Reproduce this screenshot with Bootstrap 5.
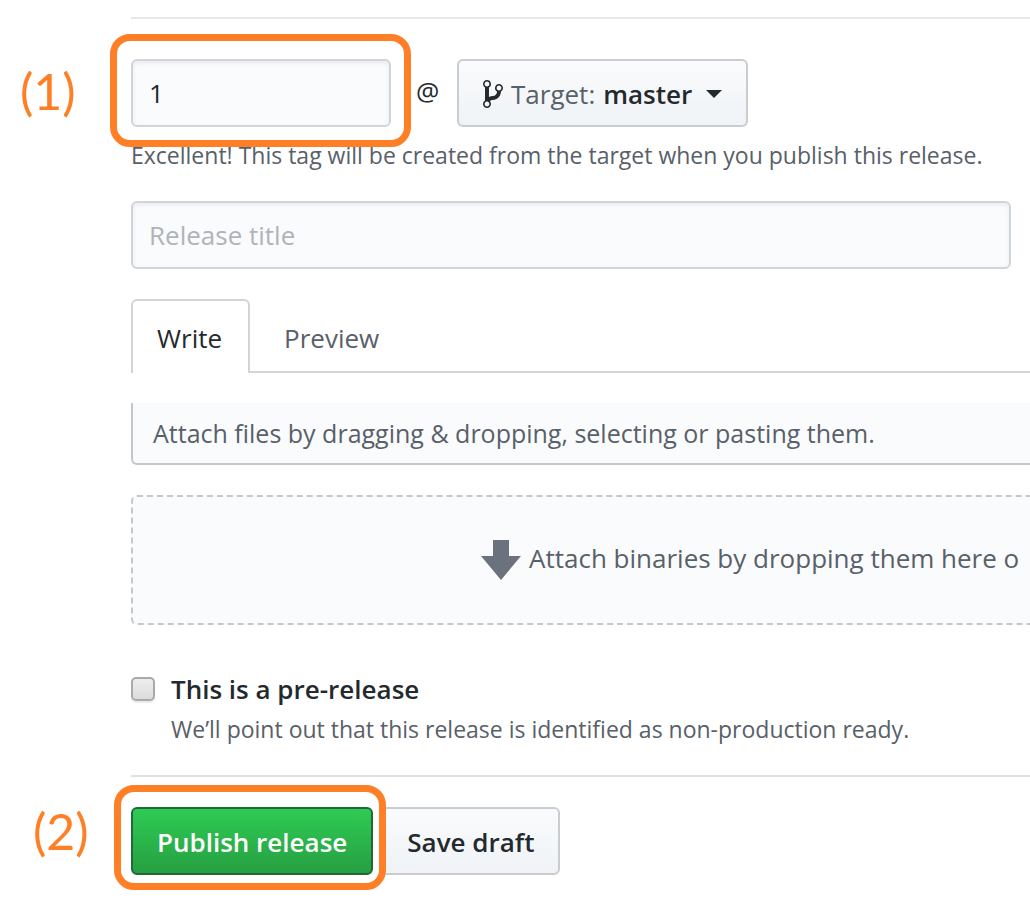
<!DOCTYPE html>
<html lang="en">
<head>
<meta charset="utf-8">
<meta name="viewport" content="width=device-width, initial-scale=1">
<title>New release</title>
<link href="https://cdn.jsdelivr.net/npm/bootstrap@5.3.0/dist/css/bootstrap.min.css" rel="stylesheet">
<style>
  body { font-family: "Open Sans", "Noto Sans", sans-serif; font-size: 26px; line-height: 36px; color: #24292e; background: #fff; overflow-x: hidden; }
  .page { padding-top: 17px; }
  .gutter { flex: 0 0 131px; }
  .indent { margin-left: 131px; }
  .rule { border-top: 2px solid #e6e8ec; }
  .rule-end { border-color: #dfe2e5; margin-top: 28px; }
  .step { font-family: Lato, sans-serif; font-size: 50px; color: #ff7f27; }
  .step-1 { padding-left: 20px; line-height: 64px; }
  .step-2 { padding-left: 33px; line-height: 48px; }
  .ring { position: absolute; border: 7px solid #ff7f27; border-radius: 20px; pointer-events: none; z-index: 2; }
  .ring-tag { inset: -25px -20px -20px -21px; }
  .ring-publish { inset: -22px -13px -15px -17px; }
  .field { height: 68px; padding: 0 16px; font-size: 26px; color: #24292e; background: #fafbfc; border: 2px solid #d1d5da; border-radius: 6px; box-shadow: inset 0 2px 4px rgba(27,31,35,.075); }
  .field::placeholder { color: #afb4ba; opacity: 1; }
  .tag-box { width: 260px; }
  .at { width: 66px; line-height: 64px; padding-left: 25px; font-size: 26px; }
  .btn-box { height: 68px; padding: 2px 24px 0; font-size: 26px; font-weight: 600; line-height: 36px; border: 2px solid #c9ccd1; border-radius: 6px; color: #24292e; background: linear-gradient(#fafbfc, #eff3f6); white-space: nowrap; }
  .btn-publish { color: #fff; border-color: #22693a; background: linear-gradient(#2fcb53, #269f42); }
  .target-word { color: #586069; font-weight: 500; }
  .caret { border: 8px solid transparent; border-top-color: #24292e; border-bottom: 0; margin-left: 14px; }
  .note { font-size: 23px; line-height: 36px; color: #586069; white-space: nowrap; }
  .tag-note { margin-top: 10px; }
  .title-row { margin: 28px 19px 30px 131px; }
  .tabs { border-bottom: 2px solid #d1d5da; height: 74px; }
  .tab { height: 74px; border: 2px solid transparent; border-bottom: 0; border-radius: 6px 6px 0 0; background: none; color: #586069; padding: 2px 26px 0 24px; }
  .tab-on { background: #fff; border-color: #d1d5da; color: #24292e; }
  .attach { height: 62px; margin-top: 30px; padding-left: 20px; border: 2px solid #c3c8cf; border-width: 0 0 2px 2px; border-bottom-left-radius: 6px; background: #fafbfc; color: #586069; font-size: 25px; }
  .drop { height: 130px; margin-top: 30px; padding-left: 348px; border: 2px dashed #c3c8cf; border-right: 0; border-radius: 6px 0 0 6px; background: #fafbfc; color: #586069; white-space: nowrap; overflow: hidden; }
  .pre { margin-top: 46px; }
  .tick { appearance: none; width: 24px; height: 24px; margin: 6px 16px 0 0; border: 2px solid #aaa; border-radius: 5px; background: linear-gradient(#ededed, #dcdcdc); box-shadow: 0 2px 1px rgba(0,0,0,.08); }
  .buttons { margin-top: 30px; }
</style>
</head>
<body>
<main class="page overflow-hidden pb-4">
  <div class="indent rule"></div>
  <div class="d-flex mt-4 pt-3">
    <div class="gutter step step-1">(1)</div>
    <div class="position-relative">
      <input class="field tag-box d-block" type="text" value="1" aria-label="Tag version">
      <span class="ring ring-tag"></span>
    </div>
    <span class="at">@</span>
    <button class="btn-box d-flex align-items-center" type="button">
      <svg width="20" height="32" viewBox="0 0 10 16" fill="#24292e" class="me-2" aria-hidden="true"><path fill-rule="evenodd" d="M10 5c0-1.11-.89-2-2-2a1.993 1.993 0 0 0-1 3.72v.3c-.02.52-.23.98-.63 1.38-.4.4-.86.61-1.38.63-.83.02-1.48.16-2 .45V4.72a1.993 1.993 0 0 0-1-3.72C.88 1 0 1.89 0 3a2 2 0 0 0 1 1.72v6.56c-.59.35-1 .99-1 1.72 0 1.11.89 2 2 2 1.11 0 2-.89 2-2 0-.53-.2-1-.53-1.36.09-.06.48-.41.59-.47.25-.11.56-.17.94-.17 1.05-.05 1.95-.45 2.75-1.25S8.950 7.770 9 6.730h-.02C9.590 6.370 10 5.730 10 5zM2 1.800c.66 0 1.200.55 1.200 1.200 0 .65-.55 1.200-1.200 1.200C1.350 4.200.8 3.650.8 3c0-.65.55-1.200 1.200-1.200zm0 12.410c-.66 0-1.200-.55-1.200-1.200 0-.65.55-1.200 1.200-1.200.65 0 1.200.55 1.200 1.200 0 .65-.55 1.200-1.200 1.200zm6-8c-.66 0-1.200-.55-1.200-1.200 0-.65.55-1.200 1.200-1.200.65 0 1.200.55 1.200 1.200 0 .65-.55 1.200-1.200 1.200z"/></svg>
      <span class="target-word me-2">Target:</span><span>master</span><span class="caret"></span>
    </button>
  </div>
  <div class="indent note tag-note">Excellent! This tag will be created from the target when you publish this release.</div>
  <div class="title-row"><input class="field d-block w-100" type="text" placeholder="Release title" aria-label="Release title"></div>
  <div class="indent tabs d-flex">
    <button class="tab tab-on" type="button">Write</button>
    <button class="tab ms-2" type="button">Preview</button>
  </div>
  <div class="indent attach d-flex align-items-center">Attach files by dragging &amp; dropping, selecting or pasting them.</div>
  <div class="indent drop d-flex align-items-center">
    <svg class="flex-shrink-0 me-2" width="40" height="40" viewBox="0 0 40 40" fill="#6a737d" aria-hidden="true"><path d="M12 0h16v16h12L20 40 0 16h12z"/></svg>
    <span class="pb-1">Attach binaries by dropping them here o</span>
  </div>
  <div class="indent pre d-flex">
    <input class="tick flex-shrink-0" type="checkbox" id="prerelease">
    <div>
      <label class="fw-semibold d-block" for="prerelease">This is a pre-release</label>
      <div class="note pt-1">We’ll point out that this release is identified as non-production ready.</div>
    </div>
  </div>
  <div class="indent rule rule-end"></div>
  <div class="d-flex buttons">
    <div class="gutter step step-2">(2)</div>
    <div class="position-relative me-2">
      <button class="btn-box btn-publish" type="submit">Publish release</button>
      <span class="ring ring-publish"></span>
    </div>
    <button class="btn-box" type="button">Save draft</button>
  </div>
</main>
<script src="https://cdn.jsdelivr.net/npm/bootstrap@5.3.0/dist/js/bootstrap.bundle.min.js"></script>
</body>
</html>
